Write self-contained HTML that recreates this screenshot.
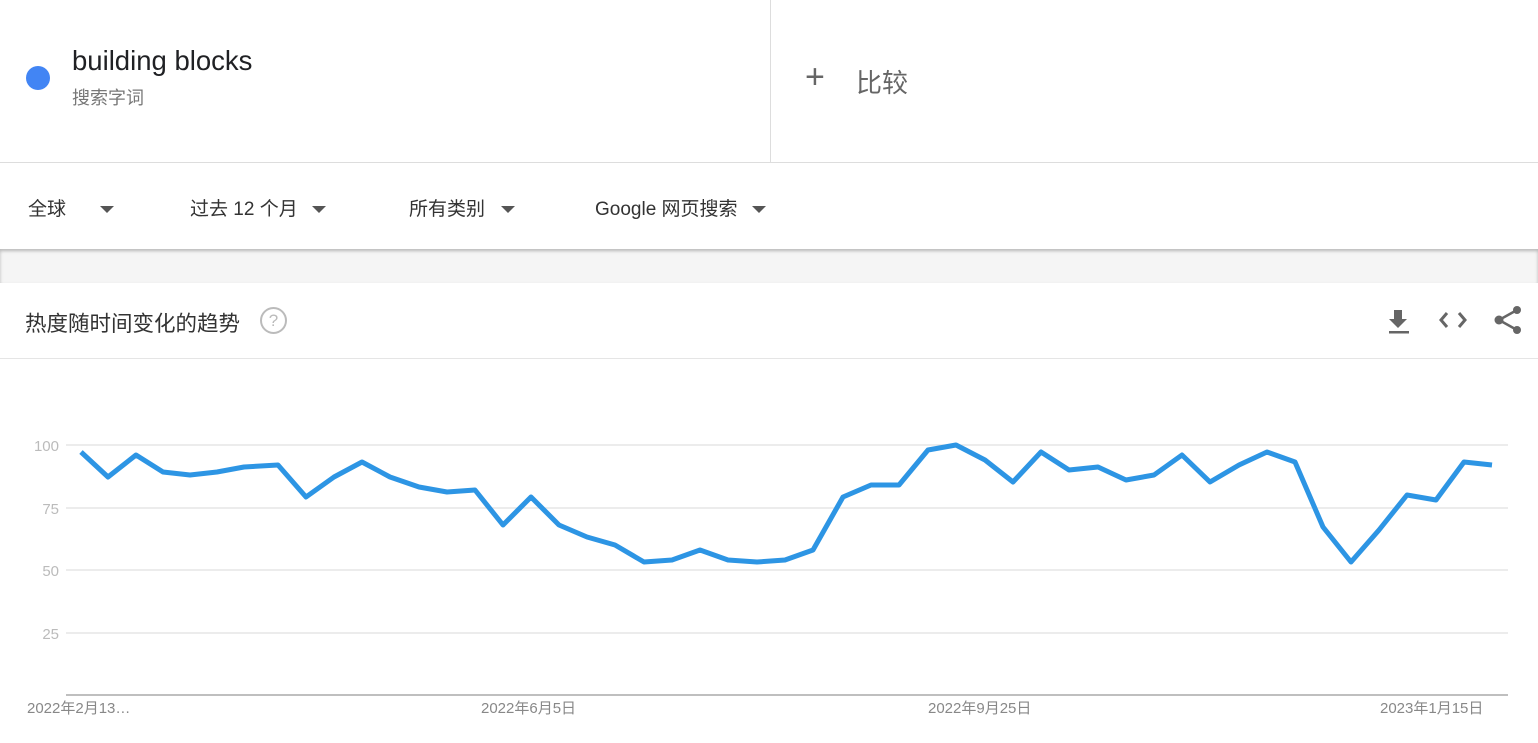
<!DOCTYPE html>
<html><head><meta charset="utf-8"><style>
body{margin:0;width:1538px;height:743px;overflow:hidden;background:#fff;font-family:"Liberation Sans","Noto Sans CJK SC",sans-serif;position:relative}
.a{position:absolute}
.dd{font-size:19px;color:#333}
.tri{display:inline-block;width:0;height:0;border-left:7px solid transparent;border-right:7px solid transparent;border-top:7px solid #555;vertical-align:middle;margin-left:22px}
</style></head><body>
<div class="a" style="left:26px;top:66px;width:24px;height:24px;border-radius:50%;background:#4285f4"></div>
<div class="a" style="left:72px;top:45px;font-size:27.5px;color:#202124">building blocks</div>
<div class="a" style="left:72px;top:84px;font-size:18px;color:#777">搜索字词</div>
<div class="a" style="left:770px;top:0;width:1px;height:162px;background:#ddd"></div>
<div class="a" style="left:805px;top:58px;font-size:34px;color:#666;font-weight:300">+</div>
<div class="a" style="left:856px;top:63px;font-size:26px;color:#666">比较</div>
<div class="a" style="left:0;top:162px;width:1538px;height:1px;background:#ddd"></div>
<div class="a dd" style="left:28px;top:194px">全球<span class="tri" style="margin-left:34px"></span></div>
<div class="a dd" style="left:190px;top:194px">过去 12 个月<span class="tri" style="margin-left:14px"></span></div>
<div class="a dd" style="left:409px;top:194px">所有类别<span class="tri" style="margin-left:16px"></span></div>
<div class="a dd" style="left:595px;top:194px">Google 网页搜索<span class="tri" style="margin-left:14px"></span></div>
<div class="a" style="left:0;top:249px;width:1538px;height:34px;background:#f5f5f5;box-shadow:inset 0 2px 3px rgba(0,0,0,.25)"></div>
<div class="a" style="left:25px;top:307px;font-size:21.5px;color:#333">热度随时间变化的趋势</div>
<div class="a" style="left:260px;top:307px;width:23px;height:23px;border:2px solid #bbb;border-radius:50%;color:#bbb;font-size:17px;text-align:center;line-height:24px">?</div>
<svg class="a" style="left:1380px;top:300px" width="150" height="40">
<path d="M14 10h8v9h5l-9 9-9-9h5z" fill="#666"/><rect x="9" y="31" width="20" height="2.5" fill="#666"/>
<path d="M67 13l-6 7 6 7M79 13l6 7-6 7" stroke="#666" stroke-width="3" fill="none"/>
<circle cx="137" cy="10" r="4" fill="#666"/><circle cx="137" cy="30" r="4" fill="#666"/><circle cx="119" cy="20" r="4.5" fill="#666"/>
<path d="M137 10L119 20 137 30" stroke="#666" stroke-width="2.5" fill="none"/>
</svg>
<div class="a" style="left:0;top:358px;width:1538px;height:1px;background:#e5e5e5"></div>
<svg class="a" style="left:0;top:0" width="1538" height="743">
<g stroke="#e0e0e0" stroke-width="1.3"><line x1="66" y1="445" x2="1508" y2="445"/><line x1="66" y1="508" x2="1508" y2="508"/><line x1="66" y1="570" x2="1508" y2="570"/><line x1="66" y1="633" x2="1508" y2="633"/></g>
<line x1="66" y1="695" x2="1508" y2="695" stroke="#aaa" stroke-width="1.5"/>
<g fill="#bbb" font-size="15" font-family="Liberation Sans,sans-serif" text-anchor="end"><text x="59" y="451">100</text><text x="59" y="514">75</text><text x="59" y="576">50</text><text x="59" y="639">25</text></g>
<g fill="#888" font-size="15" font-family="Liberation Sans,Noto Sans CJK SC,sans-serif"><text x="27" y="713">2022年2月13…</text><text x="481" y="713">2022年6月5日</text><text x="928" y="713">2022年9月25日</text><text x="1380" y="713">2023年1月15日</text></g>
<polyline fill="none" stroke="#2d95e4" stroke-width="5" stroke-linejoin="round" points="81,452 108,477 136,455 163,472 190,475 217,472 244,467 278,465 306,497 334,477 362,462 390,477 419,487 447,492 475,490 503,525 531,497 559,525 587,537 615,545 644,562 672,560 700,550 728,560 757,562 785,560 813,550 843,497 871,485 899,485 928,450 956,445 985,460 1013,482 1041,452 1069,470 1098,467 1126,480 1154,475 1182,455 1210,482 1239,465 1267,452 1295,462 1323,527 1351,562 1379,530 1407,495 1436,500 1464,462 1492,465"/>
</svg>
</body></html>
